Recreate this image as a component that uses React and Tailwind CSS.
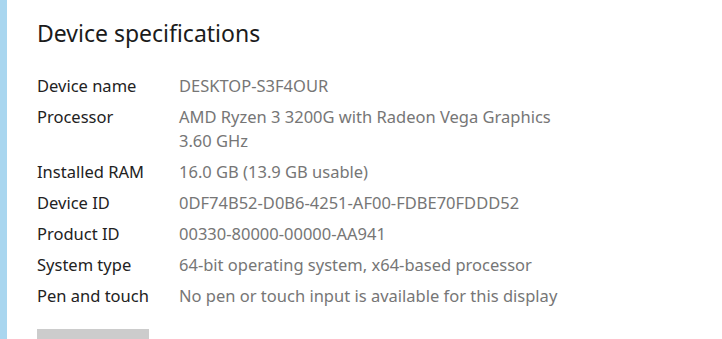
const specs = [
  ['Device name', ['DESKTOP-S3F4OUR']],
  ['Processor', ['AMD Ryzen 3 3200G with Radeon Vega Graphics', '3.60 GHz']],
  ['Installed RAM', ['16.0 GB (13.9 GB usable)']],
  ['Device ID', ['0DF74B52-D0B6-4251-AF00-FDBE70FDDD52']],
  ['Product ID', ['00330-80000-00000-AA941']],
  ['System type', ['64-bit operating system, x64-based processor']],
  ['Pen and touch', ['No pen or touch input is available for this display']],
];

export default function App() {
  return (
    <div className="flex h-[339px] w-[722px] overflow-hidden bg-white font-['Noto_Sans',sans-serif]">
      {/* accent strip */}
      <div className="w-[7px] shrink-0 bg-[#a9d6ef]" />

      <div className="flex flex-col pl-[30px] pt-[15px]">
        <h2 className="text-[23px] leading-[36px] text-[#1b1b1b]">Device specifications</h2>

        <div className="mt-[19px] flex flex-col">
          {specs.map(([label, lines]) => (
            <div key={label} className="flex py-[3.5px] text-[16.5px] leading-[24px]">
              <div className="w-[142px] shrink-0 text-[#222]">{label}</div>
              <div className="flex flex-col text-[#767676]">
                {lines.map((l) => (
                  <span key={l}>{l}</span>
                ))}
              </div>
            </div>
          ))}
        </div>

        <div className="mt-[18px] h-[20px] w-[112px] bg-[#cccccc]" />
      </div>
    </div>
  );
}
